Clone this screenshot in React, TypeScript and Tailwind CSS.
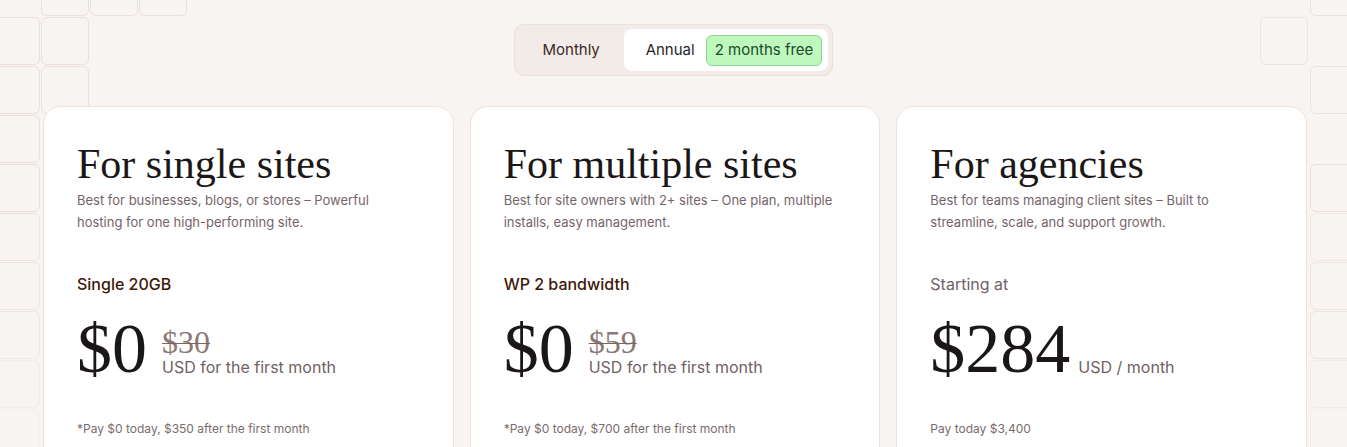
import { useState } from 'react'

type Plan = {
  title: string
  description: string
  label: string
  labelMuted?: boolean
  price: string
  oldPrice?: string
  unit: string
  note: string
}

const PLANS: Plan[] = [
  {
    title: 'For single sites',
    description: 'Best for businesses, blogs, or stores – Powerful hosting for one high-performing site.',
    label: 'Single 20GB',
    price: '$0',
    oldPrice: '$30',
    unit: 'USD for the first month',
    note: '*Pay $0 today, $350 after the first month',
  },
  {
    title: 'For multiple sites',
    description: 'Best for site owners with 2+ sites – One plan, multiple installs, easy management.',
    label: 'WP 2 bandwidth',
    price: '$0',
    oldPrice: '$59',
    unit: 'USD for the first month',
    note: '*Pay $0 today, $700 after the first month',
  },
  {
    title: 'For agencies',
    description: 'Best for teams managing client sites – Built to streamline, scale, and support growth.',
    label: 'Starting at',
    labelMuted: true,
    price: '$284',
    unit: 'USD / month',
    note: 'Pay today $3,400',
  },
]

// decorative tiles behind the page: [left, top, opacity]
const TILES: [number, number, number][] = [
  [41, -32, 1],
  [90, -32, 1],
  [139, -32, 1],
  [-8, 17, 1],
  [41, 17, 1],
  [-8, 66, 1],
  [41, 66, 1],
  [-8, 115, 1],
  [-8, 164, 1],
  [-8, 213, 0.8],
  [-8, 262, 0.7],
  [-8, 311, 0.6],
  [-8, 360, 0.4],
  [-8, 409, 0.25],
  [1310, -32, 1],
  [1260, 17, 0.8],
  [1310, 66, 1],
  [1310, 164, 1],
  [1310, 213, 0.6],
  [1310, 262, 0.8],
  [1310, 311, 0.8],
  [1310, 360, 0.5],
  [1310, 409, 0.3],
]

const serif = { fontFamily: '"Liberation Serif", "DejaVu Serif", serif' }

export default function App() {
  const [billing, setBilling] = useState<'monthly' | 'annual'>('annual')

  return (
    <div
      className="relative h-[447px] w-full overflow-hidden bg-[#f8f4f1]"
      style={{ fontFamily: 'Inter, "Noto Sans", sans-serif' }}
    >
      <div aria-hidden="true" className="pointer-events-none absolute inset-0">
        {TILES.map(([left, top, opacity], i) => (
          <div
            key={i}
            className="absolute h-[48px] w-[48px] rounded-md border border-[#ebe0da]"
            style={{ left, top, opacity }}
          />
        ))}
      </div>

      <div className="relative flex justify-center pt-[24px]">
        <div className="flex items-center rounded-[10px] border border-[#ebe0da] bg-[#f3ebe7] p-[4px]">
          <button
            type="button"
            onClick={() => setBilling('monthly')}
            className={`h-[42px] w-[105px] rounded-lg text-[15px] text-[#3a2a2a] ${
              billing === 'monthly' ? 'bg-white' : ''
            }`}
          >
            Monthly
          </button>
          <button
            type="button"
            onClick={() => setBilling('annual')}
            className={`flex h-[42px] items-center gap-[11px] rounded-lg pl-[22px] pr-[6px] text-[15px] text-[#2a1f1f] ${
              billing === 'annual' ? 'bg-white' : ''
            }`}
          >
            <span>Annual</span>
            <span className="flex h-[31px] items-center rounded-md border border-[#8fd68e] bg-[#bdf8bc] px-[8px] text-[#1f4a2a]">
              2 months free
            </span>
          </button>
        </div>
      </div>

      <div className="relative ml-[43px] mt-[30px] grid w-[1264px] grid-cols-3 gap-[16px]">
        {PLANS.map((plan) => (
          <PlanCard key={plan.title} plan={plan} />
        ))}
      </div>
    </div>
  )
}

function PlanCard({ plan }: { plan: Plan }) {
  return (
    <section className="h-[400px] rounded-[18px] border border-[#ede3dd] bg-white px-[33px] pt-[33px]">
      <h2 className="text-[42px] leading-[48px] text-[#1c1717]" style={serif}>
        {plan.title}
      </h2>
      <p className="mt-[1px] max-w-[338px] text-[13px] leading-[22px] text-[#75646a]">
        {plan.description}
      </p>

      <p
        className={`mt-[39px] text-[16px] leading-[24px] ${
          plan.labelMuted ? 'text-[#6f6266]' : 'font-medium text-[#3e1708]'
        }`}
      >
        {plan.label}
      </p>

      <div className={`mt-[18px] flex items-end ${plan.oldPrice ? 'gap-[15px]' : 'gap-[8px]'}`}>
        <span className="text-[70px] leading-[70px] text-[#1c1717]" style={serif}>
          {plan.price}
        </span>
        <div className="mb-[7px] flex flex-col">
          {plan.oldPrice ? (
            <span
              className="text-[32px] leading-[30px] text-[#8a7774] line-through decoration-[#7a6560] decoration-1"
              style={serif}
            >
              {plan.oldPrice}
            </span>
          ) : null}
          <span className="text-[16px] leading-[20px] text-[#6f6266]">{plan.unit}</span>
        </div>
      </div>

      <p className="mt-[37px] text-[12px] leading-[16px] text-[#7a6c6e]">{plan.note}</p>
    </section>
  )
}
